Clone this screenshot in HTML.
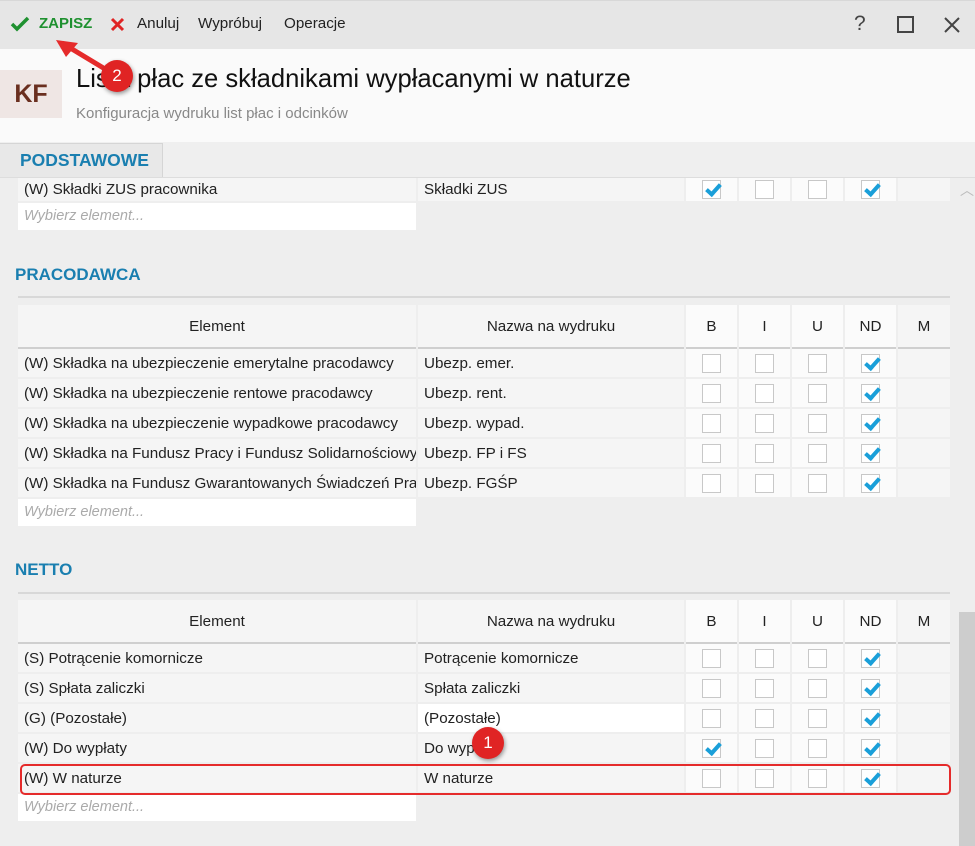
<!DOCTYPE html>
<html><head><meta charset="utf-8"><style>
*{box-sizing:border-box;margin:0;padding:0}
body{width:975px;height:846px;overflow:hidden;background:#eeeeee;font-family:"Liberation Sans",sans-serif;font-size:15.2px;color:#222;position:relative}
.abs{position:absolute}
.tb{left:0;top:0;width:975px;height:49px;background:#e6e6e6;border-top:1px solid #d8d8d8}
.hd{left:0;top:49px;width:975px;height:93px;background:#fafafa}
.row{position:absolute;left:18px;display:flex;gap:2px}
.row>div{height:100%;background:#f5f5f5;display:flex;align-items:center;padding-left:6px;white-space:nowrap;overflow:hidden}
.c1{width:398px}.c2{width:266px}
.row>.cb{width:51px;background:#fbfbfb;justify-content:center;padding:0}
.row>.m{width:52px;background:#f5f5f5}
.box{width:19px;height:19px;border:1px solid #c8c8c8;background:#fff;position:relative}
.box.on::after{content:"";position:absolute;left:6px;top:0px;width:5px;height:11px;border:solid #1a9fd9;border-width:0 4px 4px 0;transform:rotate(42deg)}
.hr>div{background:#f5f5f5;justify-content:center;padding:0;border-bottom:2px solid #cfcfcf}
.wy{position:absolute;left:18px;width:398px;height:27px;background:#fff;color:#aaa;font-style:italic;padding:5px 6px;font-size:14.5px}
.sec{position:absolute;left:15px;font-weight:bold;color:#1a7fb0;font-size:17px}
.line{position:absolute;left:18px;width:932px;height:2px;background:#d8d8d8}
.badge{position:absolute;width:32px;height:32px;border-radius:50%;background:#e02424;color:#fff;font-size:17px;text-align:center;line-height:32px;box-shadow:1px 2px 4px rgba(0,0,0,.4)}
</style></head><body>
<div class="abs tb"></div>
<svg class="abs" style="left:10px;top:16px" width="20" height="16"><path d="M2 8l5 5L18 2" stroke="#1f9130" stroke-width="3.5" fill="none"/></svg>
<div class="abs" style="left:39px;top:15px;color:#1f9130;font-weight:bold;font-size:15px">ZAPISZ</div>
<svg class="abs" style="left:110px;top:17px" width="15" height="15"><path d="M2 2l11 11M13 2L2 13" stroke="#e02424" stroke-width="3"/></svg>
<div class="abs" style="left:137px;top:15px">Anuluj</div>
<div class="abs" style="left:198px;top:15px">Wypróbuj</div>
<div class="abs" style="left:284px;top:15px">Operacje</div>
<div class="abs" style="left:854px;top:12px;font-size:21px;color:#444">?</div>
<div class="abs" style="left:897px;top:16px;width:17px;height:17px;border:2px solid #444"></div>
<svg class="abs" style="left:943px;top:16px" width="18" height="18"><path d="M2 2l14 14M16 2L2 16" stroke="#444" stroke-width="2"/></svg>
<div class="abs hd"></div>
<div class="abs" style="left:0;top:70px;width:62px;height:48px;background:#efe6e4;color:#6a2f1f;font-size:25px;font-weight:bold;text-align:center;line-height:48px">KF</div>
<div class="abs" style="left:76px;top:65px;font-size:25.6px;color:#111">Lista płac ze składnikami wypłacanymi w naturze</div>
<div class="abs" style="left:76px;top:105px;font-size:15px;color:#888">Konfiguracja wydruku list płac i odcinków</div>
<div class="abs" style="left:0;top:142px;width:975px;height:36px;background:#efefef"></div>
<div class="abs" style="left:0;top:143px;width:163px;height:35px;background:#e8e8e8;border-right:1px solid #d5d5d5;border-top:1px solid #d5d5d5"></div>
<div class="abs" style="left:20px;top:150px;font-weight:bold;color:#1a7fb0;font-size:17.5px">PODSTAWOWE</div>
<div class="abs" style="left:0;top:177px;width:975px;height:1px;background:#ddd"></div>

<div class="row" style="top:178px;height:23px"><div class="c1">(W) Składki ZUS pracownika</div><div class="c2">Składki ZUS</div><div class="cb"><div class="box on"></div></div><div class="cb"><div class="box"></div></div><div class="cb"><div class="box"></div></div><div class="cb"><div class="box on"></div></div><div class="m"></div></div>
<div class="wy" style="top:203px">Wybierz element...</div>
<div class="abs" style="left:960px;top:180px;color:#bbb;font-size:14px">︿</div>

<div class="sec" style="top:265px">PRACODAWCA</div>
<div class="line" style="top:296px"></div>
<div class="row hr" style="top:305px;height:44px"><div class="c1">Element</div><div class="c2">Nazwa na wydruku</div><div class="cb">B</div><div class="cb">I</div><div class="cb">U</div><div class="cb">ND</div><div class="m" style="justify-content:center;padding:0">M</div></div>
<div class="row" style="top:349px;height:28px"><div class="c1">(W) Składka na ubezpieczenie emerytalne pracodawcy</div><div class="c2">Ubezp. emer.</div><div class="cb"><div class="box"></div></div><div class="cb"><div class="box"></div></div><div class="cb"><div class="box"></div></div><div class="cb"><div class="box on"></div></div><div class="m"></div></div>
<div class="row" style="top:379px;height:28px"><div class="c1">(W) Składka na ubezpieczenie rentowe pracodawcy</div><div class="c2">Ubezp. rent.</div><div class="cb"><div class="box"></div></div><div class="cb"><div class="box"></div></div><div class="cb"><div class="box"></div></div><div class="cb"><div class="box on"></div></div><div class="m"></div></div>
<div class="row" style="top:409px;height:28px"><div class="c1">(W) Składka na ubezpieczenie wypadkowe pracodawcy</div><div class="c2">Ubezp. wypad.</div><div class="cb"><div class="box"></div></div><div class="cb"><div class="box"></div></div><div class="cb"><div class="box"></div></div><div class="cb"><div class="box on"></div></div><div class="m"></div></div>
<div class="row" style="top:439px;height:28px"><div class="c1">(W) Składka na Fundusz Pracy i Fundusz Solidarnościowy</div><div class="c2">Ubezp. FP i FS</div><div class="cb"><div class="box"></div></div><div class="cb"><div class="box"></div></div><div class="cb"><div class="box"></div></div><div class="cb"><div class="box on"></div></div><div class="m"></div></div>
<div class="row" style="top:469px;height:28px"><div class="c1">(W) Składka na Fundusz Gwarantowanych Świadczeń Pracowniczych</div><div class="c2">Ubezp. FGŚP</div><div class="cb"><div class="box"></div></div><div class="cb"><div class="box"></div></div><div class="cb"><div class="box"></div></div><div class="cb"><div class="box on"></div></div><div class="m"></div></div>
<div class="wy" style="top:499px">Wybierz element...</div>

<div class="sec" style="top:560px">NETTO</div>
<div class="line" style="top:592px"></div>
<div class="abs" style="left:959px;top:612px;width:16px;height:234px;background:#cdcdcd"></div>
<div class="row hr" style="top:600px;height:44px"><div class="c1">Element</div><div class="c2">Nazwa na wydruku</div><div class="cb">B</div><div class="cb">I</div><div class="cb">U</div><div class="cb">ND</div><div class="m" style="justify-content:center;padding:0">M</div></div>
<div class="row" style="top:644px;height:28px"><div class="c1">(S) Potrącenie komornicze</div><div class="c2">Potrącenie komornicze</div><div class="cb"><div class="box"></div></div><div class="cb"><div class="box"></div></div><div class="cb"><div class="box"></div></div><div class="cb"><div class="box on"></div></div><div class="m"></div></div>
<div class="row" style="top:674px;height:28px"><div class="c1">(S) Spłata zaliczki</div><div class="c2">Spłata zaliczki</div><div class="cb"><div class="box"></div></div><div class="cb"><div class="box"></div></div><div class="cb"><div class="box"></div></div><div class="cb"><div class="box on"></div></div><div class="m"></div></div>
<div class="row" style="top:704px;height:28px"><div class="c1">(G) (Pozostałe)</div><div class="c2" style="background:#fff">(Pozostałe)</div><div class="cb"><div class="box"></div></div><div class="cb"><div class="box"></div></div><div class="cb"><div class="box"></div></div><div class="cb"><div class="box on"></div></div><div class="m"></div></div>
<div class="row" style="top:734px;height:28px"><div class="c1">(W) Do wypłaty</div><div class="c2">Do wypłaty</div><div class="cb"><div class="box on"></div></div><div class="cb"><div class="box"></div></div><div class="cb"><div class="box"></div></div><div class="cb"><div class="box on"></div></div><div class="m"></div></div>
<div class="row" style="top:764px;height:28px"><div class="c1">(W) W naturze</div><div class="c2">W naturze</div><div class="cb"><div class="box"></div></div><div class="cb"><div class="box"></div></div><div class="cb"><div class="box"></div></div><div class="cb"><div class="box on"></div></div><div class="m"></div></div>
<div class="wy" style="top:794px">Wybierz element...</div>
<div class="abs" style="left:20px;top:764px;width:931px;height:31px;border:2px solid #e52b2b;border-radius:5px"></div>

<div class="badge" style="left:472px;top:727px">1</div>
<svg class="abs" style="left:40px;top:35px" width="80" height="50"><path d="M22 8L75 40" stroke="#e52b2b" stroke-width="5"/><path d="M16 5L38 8L26 22Z" fill="#e52b2b"/></svg>
<div class="badge" style="left:101px;top:60px">2</div>
</body></html>
